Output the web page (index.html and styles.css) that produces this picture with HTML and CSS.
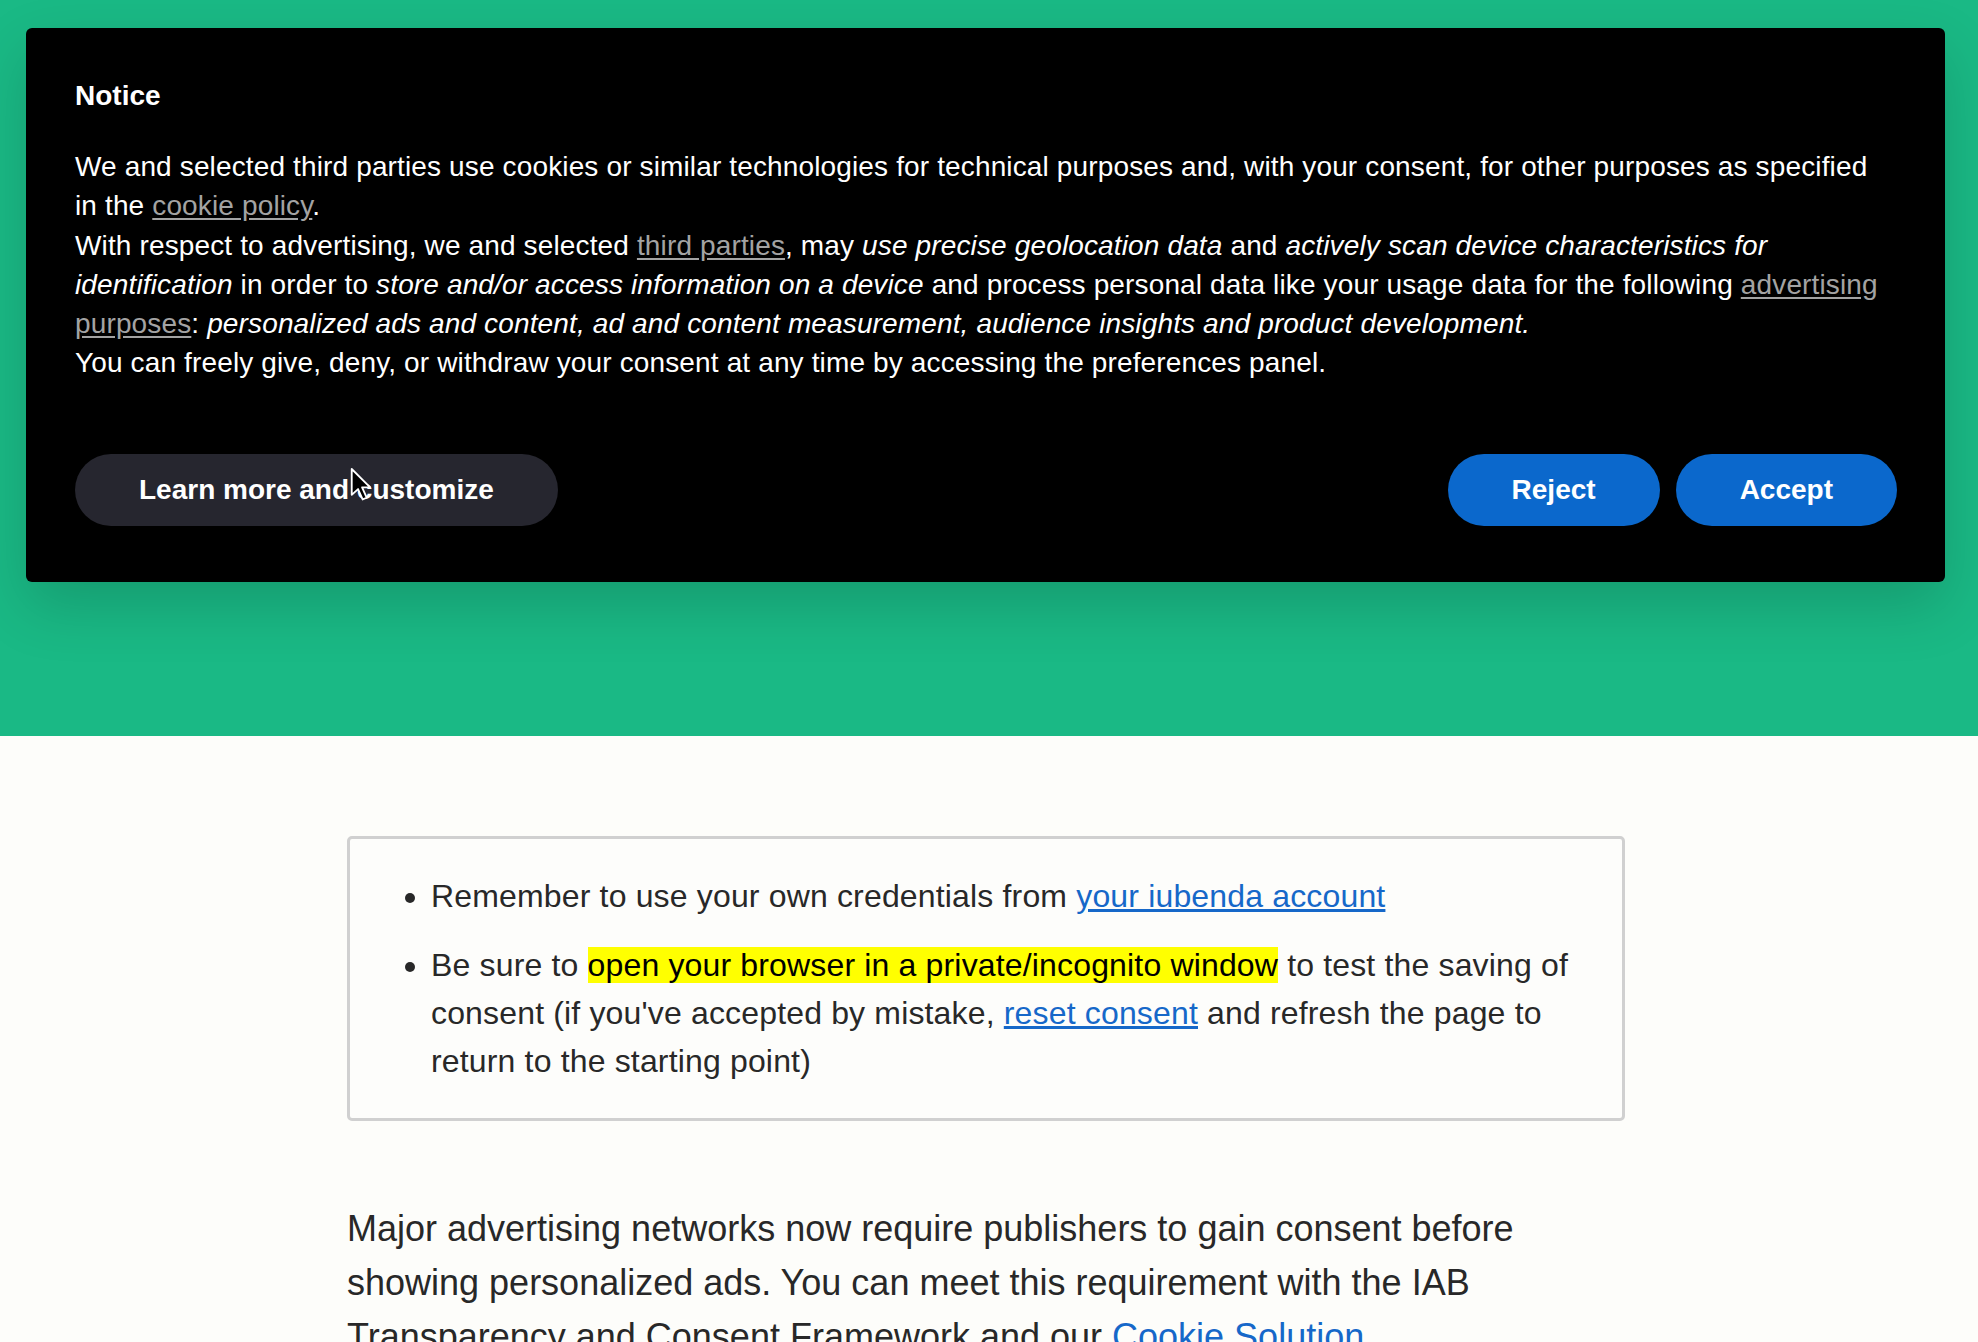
FILE: index.html
```html
<!DOCTYPE html>
<html lang="en">
<head>
<meta charset="utf-8">
<title>Cookie notice</title>
<link rel="stylesheet" href="styles.css">
</head>
<body>
<header class="hero">
  <section class="notice">
    <h2 class="notice-title">Notice</h2>
    <p class="notice-text">We and selected third parties use cookies or similar technologies for technical purposes and, with your consent, for other purposes as specified<br>in the <a href="#" class="notice-link">cookie policy</a>.<br>With respect to advertising, we and selected <a href="#" class="notice-link">third parties</a>, may <em>use precise geolocation data</em> and <em>actively scan device characteristics for<br>identification</em> in order to <em>store and/or access information on a device</em> and process personal data like your usage data for the following <a href="#" class="notice-link">advertising<br>purposes</a>: <em>personalized ads and content, ad and content measurement, audience insights and product development.</em><br>You can freely give, deny, or withdraw your consent at any time by accessing the preferences panel.</p>
    <div class="notice-actions">
      <button class="btn btn-ghost">Learn more and customize
        <svg class="cursor" viewBox="0 0 20 30" width="23" height="35" aria-hidden="true"><path d="M1.5 1.5 L1.5 24 L7 19 L11 28 L14.5 26.5 L10.5 17.5 L17.5 17.5 Z" fill="#000" stroke="#fff" stroke-width="1.6" stroke-linejoin="round"/></svg>
      </button>
      <div class="notice-right">
        <button class="btn btn-primary">Reject</button>
        <button class="btn btn-primary">Accept</button>
      </div>
    </div>
  </section>
</header>
<main class="content">
  <div class="tip-box">
    <ul class="tip-list">
      <li>Remember to use your own credentials from <a href="#" class="link">your iubenda account</a></li>
      <li>Be sure to <mark class="hl">open your browser in a private/incognito window</mark> to test the saving of<br>consent (if you've accepted by mistake, <a href="#" class="link">reset consent</a> and refresh the page to<br>return to the starting point)</li>
    </ul>
  </div>
  <p class="lead">Major advertising networks now require publishers to gain consent before<br>showing personalized ads. You can meet this requirement with the IAB<br>Transparency and Consent Framework and our <a href="#" class="link">Cookie Solution</a>.</p>
</main>
</body>
</html>
```
FILE: styles.css
```css
html, body {
  margin: 0;
  padding: 0;
}
body {
  background: #fdfdfa;
  font-family: "Liberation Sans", Arial, Helvetica, sans-serif;
  color: #282828;
  overflow: hidden;
}
.hero {
  background: #1ab985;
  height: 736px;
  box-sizing: border-box;
  padding: 28px 33px 0 26px;
}
.notice {
  background: #000;
  border-radius: 6px;
  padding: 48px 48px 56px 49px;
  box-shadow: 0 24px 60px rgba(0, 0, 0, 0.16);
  color: #fff;
}
.notice-title {
  margin: 0 0 32px;
  font-size: 28px;
  line-height: 1.4;
  font-weight: bold;
}
.notice-text {
  margin: 0;
  font-size: 28px;
  line-height: 1.4;
  letter-spacing: 0.14px;
  white-space: nowrap;
}
.notice-text em {
  font-style: italic;
}
.notice-link {
  color: #a3a3a3;
  text-decoration: underline;
  text-underline-offset: 3px;
}
.notice-actions {
  margin-top: 72px;
  display: flex;
  justify-content: space-between;
  align-items: center;
}
.notice-right {
  display: flex;
  gap: 16px;
}
.btn {
  font-family: "Liberation Sans", Arial, Helvetica, sans-serif;
  font-size: 28px;
  font-weight: bold;
  height: 72px;
  padding: 0 64px;
  border: 0;
  border-radius: 36px;
  color: #fff;
  cursor: pointer;
  white-space: nowrap;
}
.btn-ghost {
  background: #26262f;
  position: relative;
  padding: 0 64px;
}
.btn-primary {
  background: #0b68cc;
}
.cursor {
  position: absolute;
  left: 275px;
  top: 13px;
}
.content {
  width: 1278px;
  margin-left: 347px;
  padding-top: 100px;
}
.tip-box {
  border: 3px solid #d0d0d0;
  border-radius: 5px;
  padding: 33px 0 33px 0;
  background: #fdfdfb;
}
.tip-list {
  margin: 0;
  padding-left: 81px;
  font-size: 32px;
  line-height: 1.5;
  letter-spacing: 0.16px;
  white-space: nowrap;
}
.tip-list li + li {
  margin-top: 21px;
}
.hl {
  background: #ffff00;
  color: #000;
}
.link {
  color: #1668c9;
  text-decoration: underline;
}
.lead {
  margin: 81px 0 0;
  font-size: 36px;
  line-height: 1.5;
  white-space: nowrap;
}
```
